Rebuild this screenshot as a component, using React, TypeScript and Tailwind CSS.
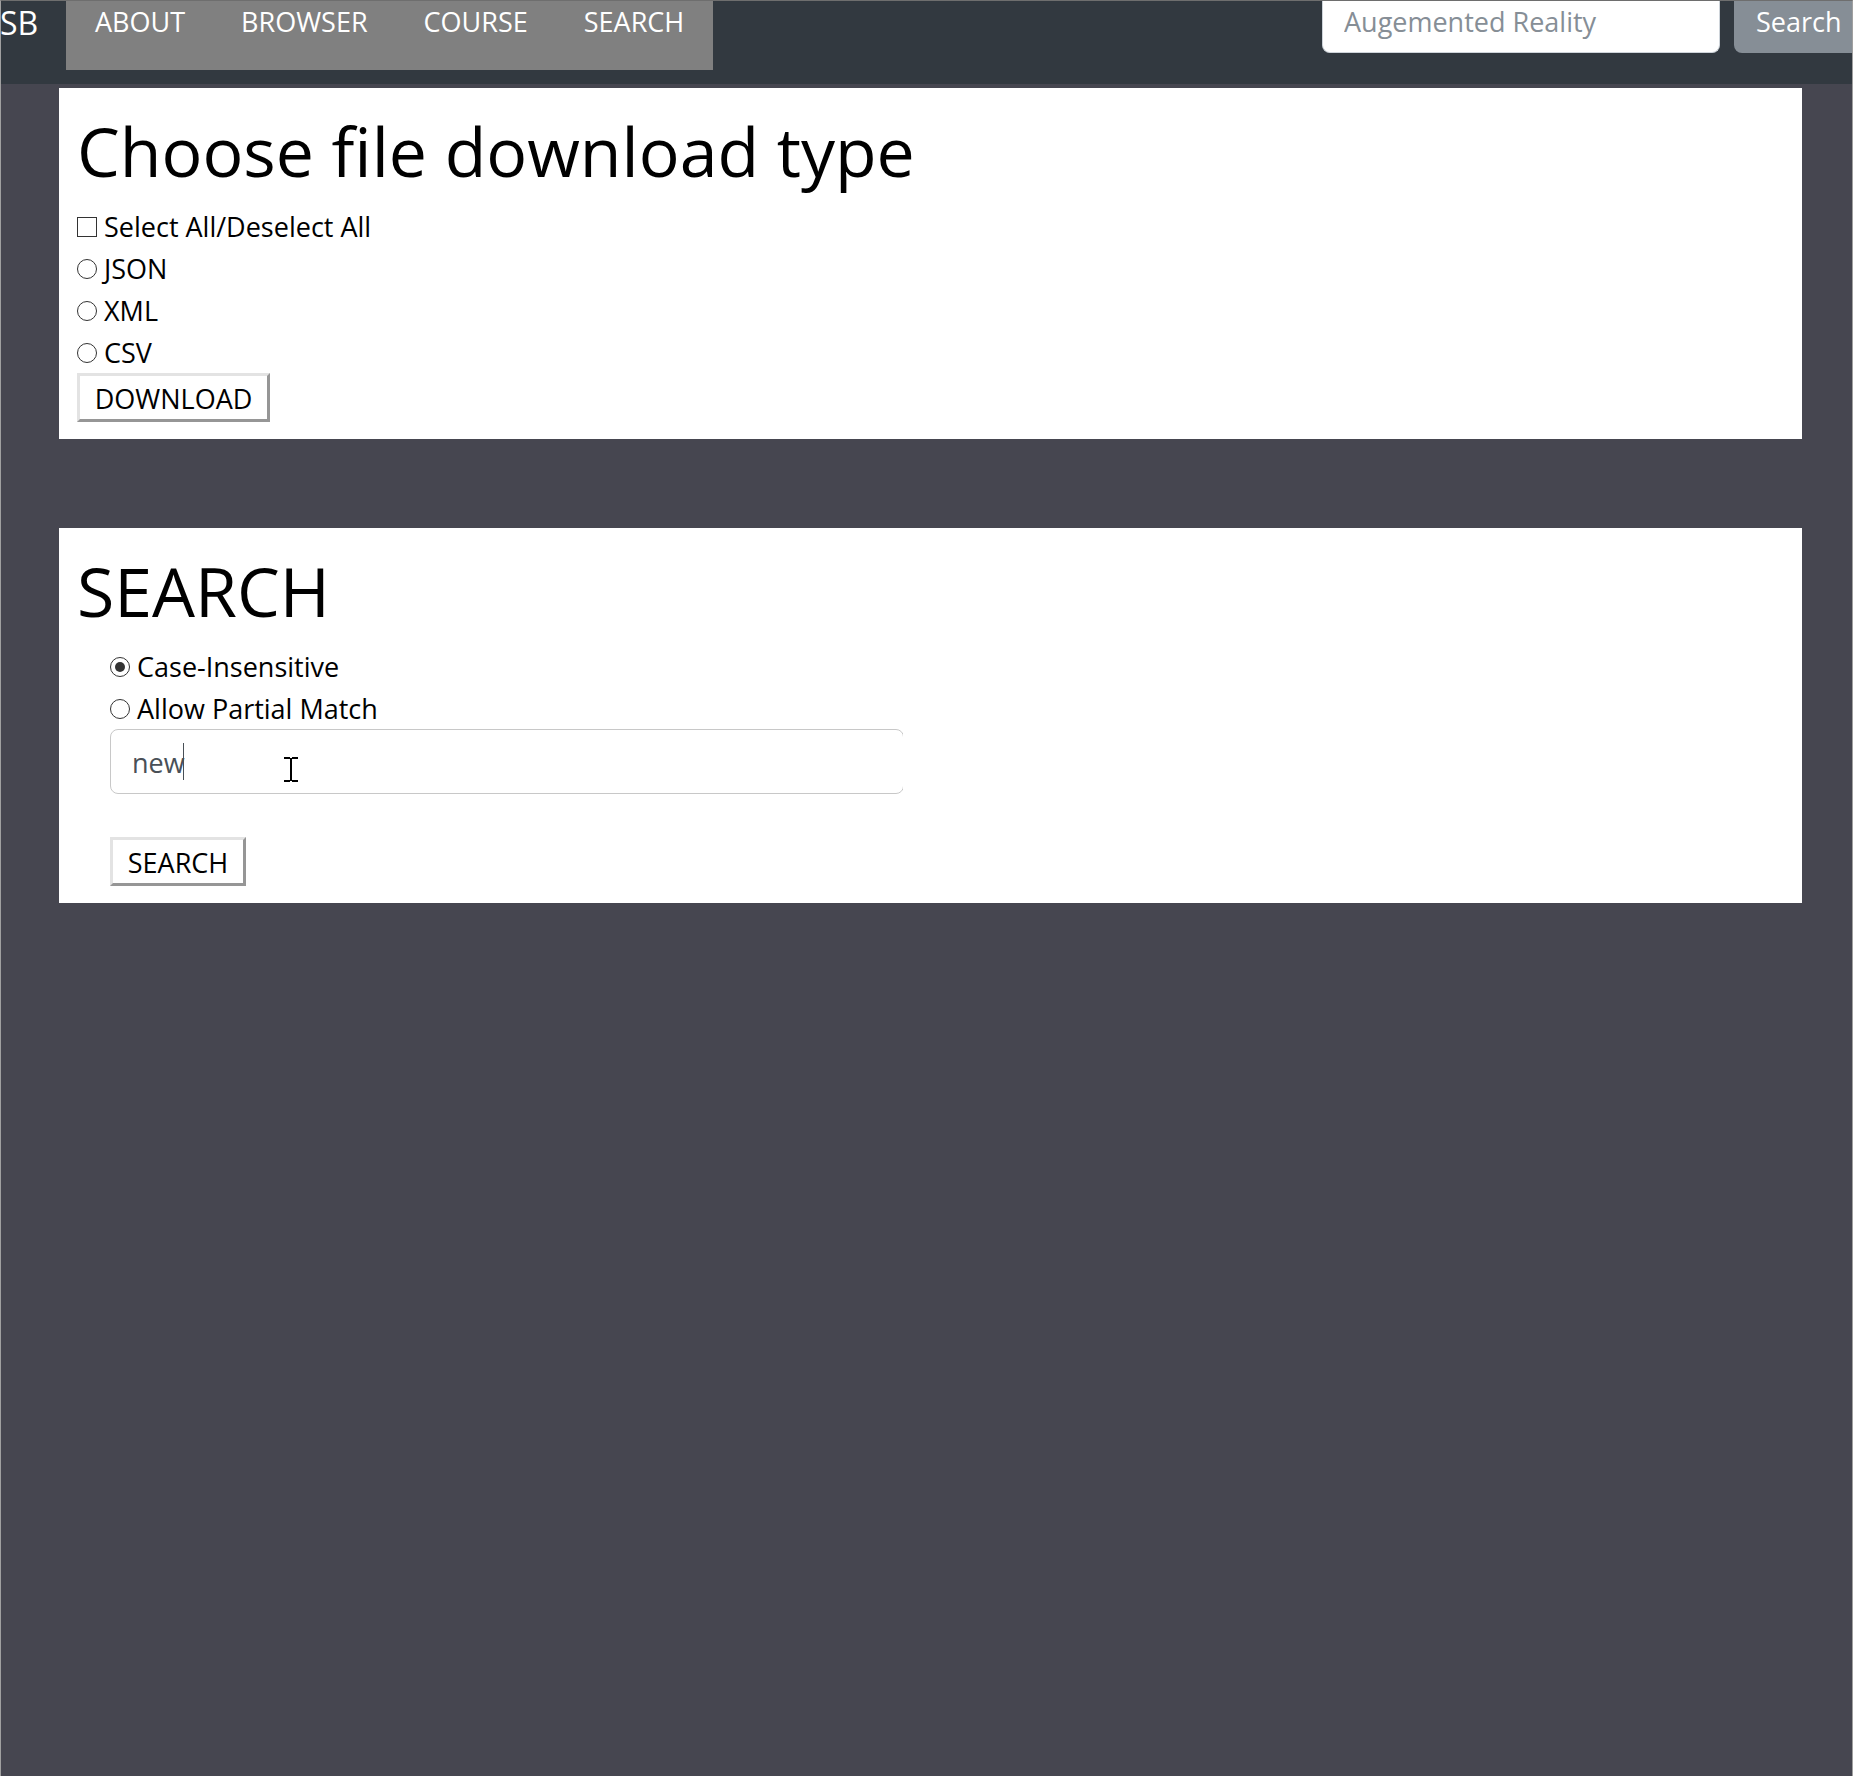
import React from "react";

const NAV_LINKS = ["ABOUT", "BROWSER", "COURSE", "SEARCH"];
const FILE_TYPES = ["JSON", "XML", "CSV"];
const MATCH_MODES = ["Case-Insensitive", "Allow Partial Match"];

const radioClass =
  "size-5 shrink-0 appearance-none rounded-full border border-[#333] bg-white bg-clip-content p-1 checked:bg-[#333]";
const buttonClass =
  "block h-[49px] border-[3px] border-t-[#e3e3e3] border-l-[#e3e3e3] border-r-[#969696] border-b-[#969696] bg-white pt-0.5 leading-10";
const sectionClass = "bg-white px-[18px] pt-[18px] pb-[17px]";
const headingClass = "mb-[11px] pt-[3px] text-[68px] leading-[84px]";

function Choice({ label, name, checked }: { label: string; name: string; checked?: boolean }) {
  return (
    <label className="flex h-[42px] items-center gap-[7px] pt-1">
      <input type="radio" name={name} defaultChecked={checked} className={radioClass} />
      <span>{label}</span>
    </label>
  );
}

function Header() {
  return (
    <header className="flex h-[83px] items-start bg-[#323940] text-white">
      <a href="#home" className="w-[65px] shrink-0 text-[32px] leading-[44px]">
        <span className="-ml-px">SB</span>
      </a>
      <nav className="flex h-[69px] bg-[#808080] px-px">
        {NAV_LINKS.map((item) => (
          <a key={item} href={"#" + item.toLowerCase()} className="px-7 leading-[42px]">
            {item}
          </a>
        ))}
      </nav>
      <form className="ml-auto flex gap-[14px]" onSubmit={(e) => e.preventDefault()}>
        <input
          type="search"
          aria-label="Search courses"
          placeholder="Augemented Reality"
          className="h-[52px] w-[398px] rounded-b-lg border border-t-0 border-[#ced4da] bg-white px-[21px] pb-[10px] placeholder:text-[#868e96]"
        />
        <button type="submit" className="h-[52px] w-[118px] rounded-bl-lg bg-[#868e96] pb-[9px] pl-[22px] text-left">
          Search
        </button>
      </form>
    </header>
  );
}

function TextCursor() {
  return (
    <svg
      className="pointer-events-none absolute left-[174px] top-7"
      width="14"
      height="25"
      viewBox="0 0 14 25"
      fill="#000"
      shapeRendering="crispEdges"
      aria-hidden="true"
    >
      <path d="M0 0h6v1h2V0h6v2H8v21h6v2H8v-1H6v1H0v-2h6V2H0z" />
    </svg>
  );
}

export default function App() {
  return (
    <div className="min-h-screen overflow-x-hidden border-x border-t border-x-[#a0a0a0] border-t-[#6e6e6e] bg-[#464650] font-['Open_Sans',sans-serif] text-[27px] text-black">
      <Header />
      <main className="mt-1 mr-[50px] ml-[58px] flex flex-col gap-[89px]">
        <section className={sectionClass}>
          <h1 className={headingClass}>Choose file download type</h1>
          <form onSubmit={(e) => e.preventDefault()}>
            <label className="flex h-[42px] items-center gap-[7px] pt-1">
              <input
                type="checkbox"
                className="size-5 shrink-0 appearance-none border border-[#333] bg-white checked:bg-[#333]"
              />
              <span>Select All/Deselect All</span>
            </label>
            {FILE_TYPES.map((type) => (
              <Choice key={type} name="file-type" label={type} />
            ))}
            <button type="submit" className={buttonClass + " mt-px w-[193px]"}>
              DOWNLOAD
            </button>
          </form>
        </section>
        <section className={sectionClass}>
          <h1 className={headingClass}>SEARCH</h1>
          <form className="pl-[33px]" onSubmit={(e) => e.preventDefault()}>
            {MATCH_MODES.map((mode, i) => (
              <Choice key={mode} name="match-mode" label={mode} checked={i === 0} />
            ))}
            <div className="relative mt-px mb-[43px] w-[793px] max-w-full overflow-hidden">
              <input
                type="text"
                aria-label="Search text"
                defaultValue="new"
                className="block h-[65px] w-[calc(100%+1px)] rounded-lg border border-[#c8c8c8] bg-white px-[21px] pt-0.5 text-[#495057]"
              />
              <span className="absolute left-[73px] top-[14px] h-[37px] w-px bg-[#495057]" />
              <TextCursor />
            </div>
            <button type="submit" className={buttonClass + " w-[136px]"}>
              SEARCH
            </button>
          </form>
        </section>
      </main>
    </div>
  );
}
